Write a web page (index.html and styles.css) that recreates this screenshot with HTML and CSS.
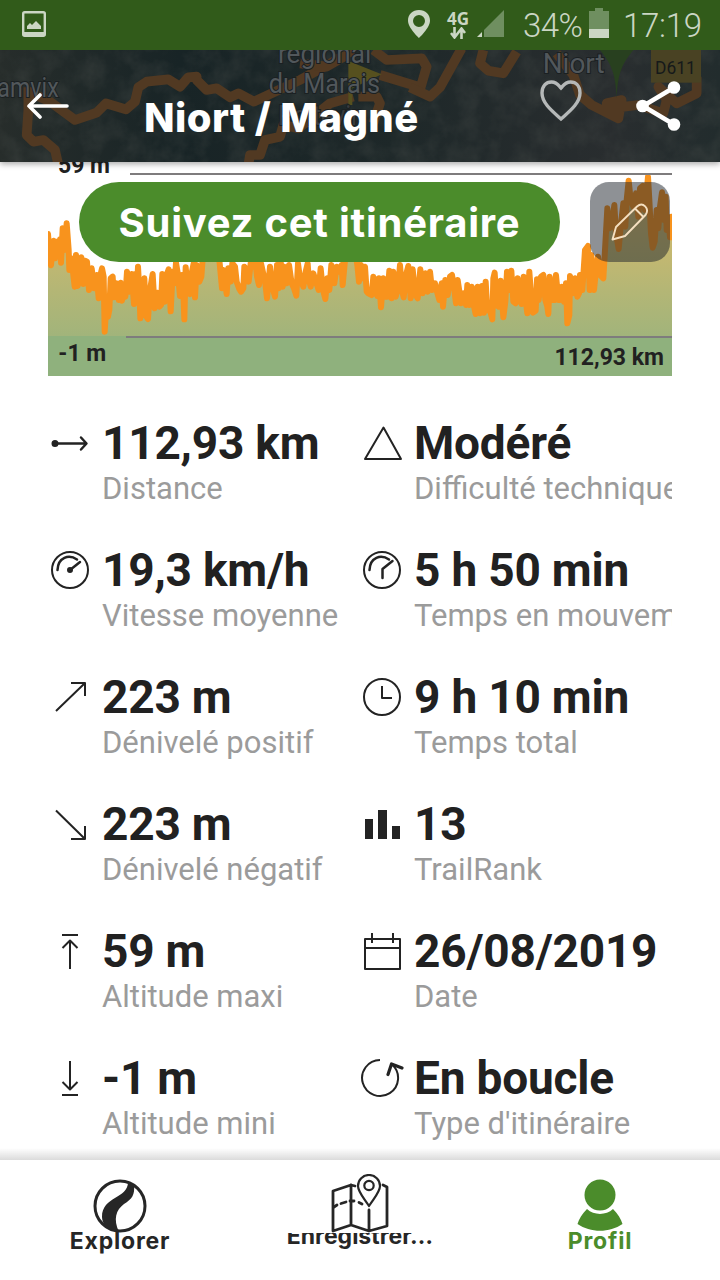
FILE: index.html
```html
<!DOCTYPE html>
<html lang="fr">
<head>
    <meta charset="UTF-8">
    <meta name="viewport" content="width=device-width, initial-scale=1.0">
    <title>Niort / Magné</title>
    <link rel="stylesheet" href="styles.css">
</head>
<body>
    <div class="app">
        <div class="statusbar">
            <svg class="shot-icon" width="24" height="26" viewBox="0 0 24 26"><rect x="1.2" y="1.2" width="21.6" height="23.6" rx="1.5" fill="none" stroke="#cbd6c4" stroke-width="2.4"/><path d="M2 21h20v4H2zM5 18v-3l3-3 2 2 4-4 5 5v3z" fill="#cbd6c4"/></svg>
            <svg class="pin-icon" width="22" height="28" viewBox="0 0 22 28"><path d="M11 0C4.500 0 0 4.500 0 10.500 0 18 11 28 11 28s11-10 11-17.500C22 4.500 17.500 0 11 0zm0 5a6 6 0 1 1 0 12 6 6 0 0 1 0-12z" fill="#cbd6c4" fill-rule="evenodd"/></svg>
            <div class="network">
                <span>4G</span>
                <svg width="16" height="12" viewBox="0 0 16 12"><path d="M4.500 0v10M1 6l3.500 4.500L8 6M11.500 12V2M8 6l3.500-4.500L15 6" fill="none" stroke="#cbd6c4" stroke-width="2.600"/></svg>
            </div>
            <svg class="signal" width="28" height="28" viewBox="0 0 28 28"><path d="M27 0v27H7V20z" fill="#6f8f60"/><path d="M5 22v5H0z" fill="#cbd6c4"/></svg>
            <span class="percent">34%</span>
            <svg class="battery" width="20" height="30" viewBox="0 0 20 30"><path d="M0 3h6V0h8v3h6v18H0z" fill="#6f8f60"/><path d="M0 21h20v9H0z" fill="#cbd6c4"/></svg>
            <span class="time">17:19</span>
        </div>

        <header class="header">
            <svg class="map" width="720" height="112" viewBox="0 150 2160 336">
                <defs>
                    <linearGradient id="ground" x1="0" y1="0" x2="1" y2="0">
                        <stop offset="0" stop-color="#272d2b"/>
                        <stop offset="0.250" stop-color="#182426"/>
                        <stop offset="0.550" stop-color="#1e2829"/>
                        <stop offset="0.850" stop-color="#292d2f"/>
                        <stop offset="1" stop-color="#222c2d"/>
                    </linearGradient>
                    <filter id="grain" x="0" y="0" width="100%" height="100%" color-interpolation-filters="sRGB">
                        <feTurbulence type="fractalNoise" baseFrequency="0.016" numOctaves="4" seed="4"/>
                        <feColorMatrix values="0 0 0 0 0.270  0 0 0 0 0.290  0 0 0 0 0.280  1.200 0 0 0 -0.420"/>
                    </filter>
                </defs>
                <rect y="150" width="2160" height="336" fill="url(#ground)"/>
                <rect class="grain" y="150" width="2160" height="336" filter="url(#grain)"/>
                <g class="roads">
                    <path d="M85 262V330L80 405 100 425 130 420 165 450 175 495"/>
                    <path d="M85 275L150 305 225 360 290 338 318 310 378 328 405 305 415 262 440 245 505 238 540 260 565 232 590 230 590 240 620 270 650 265 690 292 715 280 762 305 900 240 1000 185 1060 150"/>
                    <path d="M745 495L750 465 780 465 795 420 840 410 850 375 895 385 990 310 1060 290"/>
                    <path d="M900 190L980 200 1040 165M1120 150L1160 180 1265 175 1280 200 1262 262 1140 225"/>
                    <path d="M1385 145L1320 262 1290 290 1230 262M1075 290L1130 290 1140 310 1120 370"/>
                    <path d="M1450 150L1440 190 1465 212 1510 220 1550 155"/>
                    <path d="M1670 160L1720 225 1740 285 1775 315 1855 355 1865 300 1820 310 1830 325 1915 315 1990 340 2000 300 1975 260 2030 310 2090 280V230"/>
                </g>
                <path d="M1045 183l100 40-88 42v50h-12z" fill="#56501f"/>
                <path d="M1795 145h110c-35 40-52 70-55 150-3-80-20-110-55-150z" fill="#28401f"/>
                <rect x="1953" y="140" width="150" height="108" fill="#494223"/>
                <g class="places">
                    <text x="-8" y="290" textLength="184" lengthAdjust="spacingAndGlyphs">amvix</text>
                    <text x="834" y="188" textLength="280" lengthAdjust="spacingAndGlyphs">régional</text>
                    <text x="806" y="280" textLength="334" lengthAdjust="spacingAndGlyphs">du Marais</text>
                    <text class="dim" x="834" y="374" textLength="260" lengthAdjust="spacingAndGlyphs">Poitevin</text>
                    <text x="1628" y="218" textLength="186" lengthAdjust="spacingAndGlyphs">Niort</text>
                </g>
                <text class="road-no" x="1965" y="221" textLength="122" lengthAdjust="spacingAndGlyphs">D611</text>
            </svg>
            <svg class="back" width="42" height="26" viewBox="0 0 42 26"><path d="M40 13H2M13 2L2 13l11 11" fill="none" stroke="#fff" stroke-width="3.600" stroke-linecap="round" stroke-linejoin="round"/></svg>
            <h1>Niort / Magné</h1>
            <svg class="heart" width="42" height="42" viewBox="0 0 42 42"><path d="M21 39C12 31 2 23 2 13 2 6 6 2 11.500 2 17 2 19 6 21 8c2-2 4-6 9.500-6C36 2 40 6 40 13c0 10-10 18-19 26z" fill="none" stroke="#b5b8b8" stroke-width="3.400"/></svg>
            <svg class="share" width="45" height="50" viewBox="0 0 45 50"><path d="M38 6.500L7 25l31 18.500" fill="none" stroke="#fff" stroke-width="4.500"/><g fill="#fff"><circle cx="38" cy="6.500" r="6.300"/><circle cx="6.500" cy="25" r="6.300"/><circle cx="38" cy="43.500" r="6.300"/></g></svg>
        </header>

        <main class="content">
            <div class="elevation">
                <svg width="624" height="214" viewBox="24 36 1872 642">
                    <defs>
                        <linearGradient id="slope" gradientUnits="userSpaceOnUse" x1="0" y1="75" x2="0" y2="560">
                            <stop offset="0" stop-color="#e3bb67"/>
                            <stop offset="1" stop-color="#a1b47b"/>
                        </linearGradient>
                    </defs>
                    <path class="line" d="M-20 300L0 600H-20V260L24 252 30 330 33 346 38 290 41 272 45 325 50 275 55 310 60 268 63 338 68 235 73 300 80 220 86 300 88 360 95 325 100 375 104 410 108 315 113 408 118 340 124 322 130 402 135 332 141 335 147 420 155 355 163 415 170 375 176 445 180 380 186 355 191 380 194 545 199 465 204 500 208 480 212 385 218 380 222 442 230 400 236 450 242 398 246 452 252 405 256 440 261 365 268 425 275 372 282 462 286 372 290 435 294 350 298 420 301 505 308 425 313 385 318 498 324 507 330 420 338 372 344 475 352 428 358 470 363 465 367 372 374 455 380 375 386 358 392 484 398 365 404 400 408 338 414 375 420 438 426 375 430 425 433 508 437 352 444 425 450 432 456 365 461 340 465 442 470 345 478 395 484 380 490 300 500 260 520 250 535 300 540 350 546 415 550 360 553 380 560 432 565 355 572 395 577 340 585 350 590 395 597 415 603 425 610 415 613 350 620 360 626 395 632 340 640 350 645 320 651 380 657 405 663 340 670 372 676 400 681 445 690 350 696 405 705 440 711 345 716 415 722 335 728 410 733 350 740 400 747 345 755 400 762 415 769 437 774 340 780 385 790 410 797 365 803 340 806 385 812 410 820 370 828 395 836 420 842 355 848 415 856 447 862 385 868 420 874 345 883 400 890 350 898 365 905 345 908 405 916 320 930 280 944 290 952 345 957 395 963 345 968 385 975 350 980 425 985 430 995 435 1000 380 1007 420 1012 438 1017 385 1023 472 1030 385 1036 440 1042 440 1048 362 1055 445 1060 365 1067 440 1074 415 1080 345 1086 420 1091 442 1098 375 1105 348 1112 445 1118 358 1125 430 1133 445 1141 358 1148 430 1156 370 1163 425 1170 365 1176 420 1185 400 1191 425 1198 450 1205 400 1209 470 1216 390 1223 435 1230 380 1236 375 1243 420 1248 460 1253 390 1259 430 1263 460 1271 430 1278 465 1282 405 1288 465 1295 410 1300 460 1307 492 1313 410 1320 490 1326 408 1332 488 1337 395 1342 480 1351 485 1357 508 1360 385 1364 368 1370 465 1376 470 1382 392 1390 502 1396 455 1401 365 1408 420 1414 362 1420 455 1427 460 1433 385 1440 440 1445 462 1451 380 1456 440 1462 490 1468 365 1475 460 1479 488 1487 482 1491 388 1496 450 1503 380 1510 375 1516 450 1522 470 1525 492 1529 380 1536 450 1543 450 1548 375 1555 450 1560 450 1565 410 1572 455 1578 400 1582 520 1588 495 1590 378 1598 430 1605 385 1612 440 1617 430 1620 375 1627 420 1635 300 1644 288 1649 420 1654 315 1662 420 1668 360 1674 320 1680 375 1690 385 1695 300 1702 175 1708 235 1715 230 1723 165 1728 250 1736 297 1742 230 1750 160 1756 230 1760 150 1766 92 1772 150 1780 170 1788 130 1795 200 1800 115 1808 108 1815 180 1824 80 1828 150 1833 250 1838 293 1844 275 1850 180 1855 235 1860 170 1866 127 1872 210 1877 140 1880 240 1886 215 1890 262 1894 200 1896 262H1930V800H-20" fill="url(#slope)"/>
                    <rect x="24" y="558" width="1872" height="120" fill="#8fb17d"/>
                    <path d="M270 72H1896M258 561H1896" stroke="#7e7c7d" stroke-width="6"/>
                    <text x="54" y="69">59 m</text>
                    <text x="55" y="633">-1 m</text>
                    <text x="1872" y="645" text-anchor="end">112,93 km</text>
                </svg>
                <button class="follow">Suivez cet itinéraire</button>
                <button class="edit" aria-label="Modifier">
                    <svg width="38" height="38" viewBox="0 0 38 38"><path d="M1.500 36.500L5 24 26 3.500c6-5 13 2 8.500 8.500L14 33zM24 5.500l8.500 8.500" fill="none" stroke="#f4dfc0" stroke-width="1.900" stroke-linejoin="round"/></svg>
                </button>
            </div>

            <div class="stats">
                <div class="stat">
                    <svg class="icon" viewBox="0 0 44 44"><circle cx="7" cy="22.500" r="2.500" fill="#232323"/><path class="bold" d="M7 22.500h31M33 16.500l5.500 6-5.500 6"/></svg>
                    <div class="text"><strong>112,93 km</strong><span>Distance</span></div>
                </div>
                <div class="stat">
                    <svg class="icon" viewBox="0 0 44 44"><path d="M23.500 6.500L41 38H5z"/></svg>
                    <div class="text"><strong>Modéré</strong><span>Difficulté technique</span></div>
                </div>
                <div class="stat">
                    <svg class="icon" viewBox="0 0 44 44"><circle cx="22" cy="22" r="18"/><path class="bold" d="M9.500 22C10 9 21 6 29 11.500M22 22l10-8"/><circle cx="22" cy="22" r="2" fill="#232323"/></svg>
                    <div class="text"><strong>19,3 km/h</strong><span>Vitesse moyenne</span></div>
                </div>
                <div class="stat">
                    <svg class="icon" viewBox="0 0 44 44"><circle cx="22" cy="22" r="18"/><path class="bold" d="M9.500 22C10 9 21 6 29 11.500M22.500 30V21l10-8"/></svg>
                    <div class="text"><strong>5 h 50 min</strong><span>Temps en mouvement</span></div>
                </div>
                <div class="stat">
                    <svg class="icon" viewBox="0 0 44 44"><path d="M8 36L37 8M23 8h14v13"/></svg>
                    <div class="text"><strong>223 m</strong><span>Dénivelé positif</span></div>
                </div>
                <div class="stat">
                    <svg class="icon" viewBox="0 0 44 44"><circle cx="22" cy="22" r="18"/><path d="M22 11v12h10"/></svg>
                    <div class="text"><strong>9 h 10 min</strong><span>Temps total</span></div>
                </div>
                <div class="stat">
                    <svg class="icon" viewBox="0 0 44 44"><path d="M8 8.500L37 37M23 37h14V24"/></svg>
                    <div class="text"><strong>223 m</strong><span>Dénivelé négatif</span></div>
                </div>
                <div class="stat">
                    <svg class="icon" viewBox="0 0 44 44"><path class="solid" d="M5 17h8v20H5zM18 8h9v29h-9zM32 24h8v13h-8z"/></svg>
                    <div class="text"><strong>13</strong><span>TrailRank</span></div>
                </div>
                <div class="stat">
                    <svg class="icon" viewBox="0 0 44 44"><path d="M14 6h16M22 40V12M14.500 19l7.500-7.500 7.500 7.500"/></svg>
                    <div class="text"><strong>59 m</strong><span>Altitude maxi</span></div>
                </div>
                <div class="stat">
                    <svg class="icon" viewBox="0 0 44 44"><path d="M5 10h35v30H5zM5 19h35M12 4v10M33 4v10"/></svg>
                    <div class="text"><strong>26/08/2019</strong><span>Date</span></div>
                </div>
                <div class="stat">
                    <svg class="icon" viewBox="0 0 44 44"><path d="M14 39h16M22 5v28M14.500 26l7.500 7.500 7.500-7.500"/></svg>
                    <div class="text"><strong>-1 m</strong><span>Altitude mini</span></div>
                </div>
                <div class="stat">
                    <svg class="icon" viewBox="0 0 44 44"><path d="M20 4A18 18 0 1 0 32 8.500"/><path class="arrow" d="M28 18.500L31.500 8l10.500 4"/></svg>
                    <div class="text"><strong>En boucle</strong><span>Type d'itinéraire</span></div>
                </div>
            </div>
        </main>

        <nav class="tabs">
            <a class="tab">
                <svg width="54" height="54" viewBox="0 0 54 54"><circle cx="27" cy="27" r="25" fill="none" stroke="#262626" stroke-width="3"/><path d="M35 3C35 20 9 17 9 38c0 7 6 14 17 15-6-13-3-22 5-28 8-5 11-9 10-19z" fill="#262626"/></svg>
                <span>Explorer</span>
            </a>
            <a class="tab record">
                <svg width="58" height="60" viewBox="0 0 58 60"><g fill="none" stroke="#262626" stroke-width="2.800" stroke-linejoin="round" stroke-linecap="round"><path d="M24 12l-4-1L2 17v40l18-6 18 6 18-5V13l-4-2M20 11v40M38 36v21"/><path d="M3 33l3-2M10 29.500l5-1.500M19 27h4M28 28.500l3 1.500"/><path d="M38 32C33 24 27 18 27 12a11 11 0 0 1 22 0c0 6-6 12-11 20z" stroke-width="2.200" fill="#fff"/><circle cx="38" cy="11.500" r="4.700" stroke-width="2.200"/></g></svg>
                <span>Enregistrer…</span>
            </a>
            <a class="tab active">
                <svg width="46" height="54" viewBox="0 0 46 54"><circle cx="23" cy="16" r="15.500" fill="#4b8c2b"/><path d="M10 30c7 6.500 19 6.500 26 0 5 5 8 10 9.500 15-13 9-32 9-45 0 1.500-5 4.500-10 9.500-15z" fill="#4b8c2b"/></svg>
                <span>Profil</span>
            </a>
        </nav>
    </div>
</body>
</html>
```
FILE: styles.css
```css
body {
    margin: 0;
    background-color: #fff;
    color: #212121;
    font-family: Roboto, sans-serif;
}
.app {
    width: 720px;
    height: 1280px;
    display: flex;
    flex-direction: column;
    overflow: hidden;
}

/* status bar */
.statusbar {
    height: 50px;
    display: flex;
    align-items: center;
    background-color: #315b1a;
    color: #cbd6c4;
    font-size: 33px;
    font-weight: 300;
}
.shot-icon {
    margin-left: 22px;
    margin-top: -2px;
}
.pin-icon {
    margin-left: 362px;
    margin-top: -2px;
}
.network {
    width: 24px;
    margin-left: 16px;
    display: flex;
    flex-direction: column;
    align-items: center;
    font: bold 17px/16px "Open Sans", sans-serif;
}
.signal {
    margin: -2px 0 0 7px;
}
.percent {
    width: 60px;
    margin-left: 18px;
    letter-spacing: -0.6px;
}
.battery {
    margin: -4px 0 0 6px;
}
.time {
    margin-left: 14px;
    letter-spacing: -0.3px;
}

/* header */
.header {
    position: relative;
    z-index: 2;
    box-sizing: border-box;
    height: 112px;
    flex-shrink: 0;
    display: flex;
    align-items: flex-start;
    padding-left: 27px;
    color: #fff;
    box-shadow: 0 2px 6px rgba(0, 0, 0, 0.35);
    clip-path: inset(0 0 -12px 0);
}
.map {
    position: absolute;
    left: 0;
    top: 0;
}
.grain {
    opacity: 0.6;
}
.roads path {
    fill: none;
    stroke: #513922;
    stroke-width: 29;
    stroke-linejoin: round;
}
.places text {
    font-size: 82px;
    fill: #51575b;
    stroke: #1b2022;
    stroke-width: 6px;
    paint-order: stroke;
}
.places .dim {
    fill: #383b3d;
}
.road-no {
    font-size: 56px;
    fill: #15191a;
}
.back, .header h1, .heart, .share {
    position: relative;
}
.back {
    margin-top: 43px;
}
.header h1 {
    width: 280px;
    margin: 43px 0 0 75px;
    font: 800 40px/50px Inter, sans-serif;
    letter-spacing: 0.4px;
    white-space: nowrap;
}
.heart {
    margin: 30px 0 0 116px;
}
.share {
    margin: 31px 0 0 54px;
}

/* content */
.content {
    position: relative;
    height: 998px;
    flex-shrink: 0;
    padding: 0 48px;
    overflow: hidden;
}
.content::after {
    content: "";
    position: absolute;
    left: 0;
    right: 0;
    bottom: 0;
    height: 12px;
    background: linear-gradient(rgba(0, 0, 0, 0), rgba(0, 0, 0, 0.14));
}
.elevation {
    position: relative;
    height: 214px;
}
.elevation svg {
    display: block;
}
.elevation text {
    font-size: 69px;
    font-weight: bold;
    fill: #212121;
}
.line {
    stroke: #f8931d;
    stroke-width: 18;
    stroke-linejoin: round;
}
.follow {
    position: absolute;
    left: 31px;
    top: 20px;
    width: 481px;
    height: 80px;
    padding: 0;
    border: none;
    border-radius: 40px;
    background-color: #4b8c2b;
    color: #fff;
    font: bold 40px Inter, sans-serif;
    letter-spacing: 0.75px;
    white-space: nowrap;
}
.edit {
    position: absolute;
    left: 542px;
    top: 20px;
    width: 80px;
    height: 80px;
    padding: 0 0 0 21px;
    border: none;
    border-radius: 19px;
    background-color: rgba(29, 36, 43, 0.5);
}

/* stats */
.stats {
    display: grid;
    grid-template-columns: 312px 312px;
    grid-auto-rows: 127px;
    margin-top: 36px;
}
.stat {
    display: flex;
    align-items: flex-start;
    overflow: hidden;
}
.icon {
    width: 44px;
    height: 44px;
    margin-top: 9px;
    flex-shrink: 0;
    fill: none;
    stroke: #232323;
    stroke-width: 2;
    stroke-linejoin: round;
}
.icon .bold {
    stroke-width: 2.5;
    stroke-linecap: round;
}
.icon .arrow {
    stroke-width: 3.2;
    stroke-linecap: round;
}
.icon .solid {
    fill: #232323;
    stroke: none;
}
.text {
    margin-left: 10px;
    white-space: nowrap;
}
.text strong, .text span {
    display: block;
}
.text strong {
    font-size: 46px;
    line-height: 62px;
    letter-spacing: -0.2px;
}
.text span {
    margin-top: -4px;
    font-size: 31px;
    line-height: 38px;
    color: #9b9b9b;
}

/* bottom tabs */
.tabs {
    height: 120px;
    display: grid;
    grid-template-columns: repeat(3, 240px);
    background-color: #fff;
}
.tab {
    display: flex;
    flex-direction: column;
    align-items: center;
    padding-top: 19px;
    color: #262626;
    font: bold 23px/28px Inter, sans-serif;
    letter-spacing: 0.8px;
}
.tab svg {
    flex-shrink: 0;
}
.tab span {
    margin-top: -6px;
}
.record {
    padding-top: 14px;
    letter-spacing: 0;
}
/* label slides under the icon here */
.record span {
    margin-top: -12px;
    clip-path: inset(11px 0 0 0);
}
.active {
    color: #4b8c2b;
}
```
